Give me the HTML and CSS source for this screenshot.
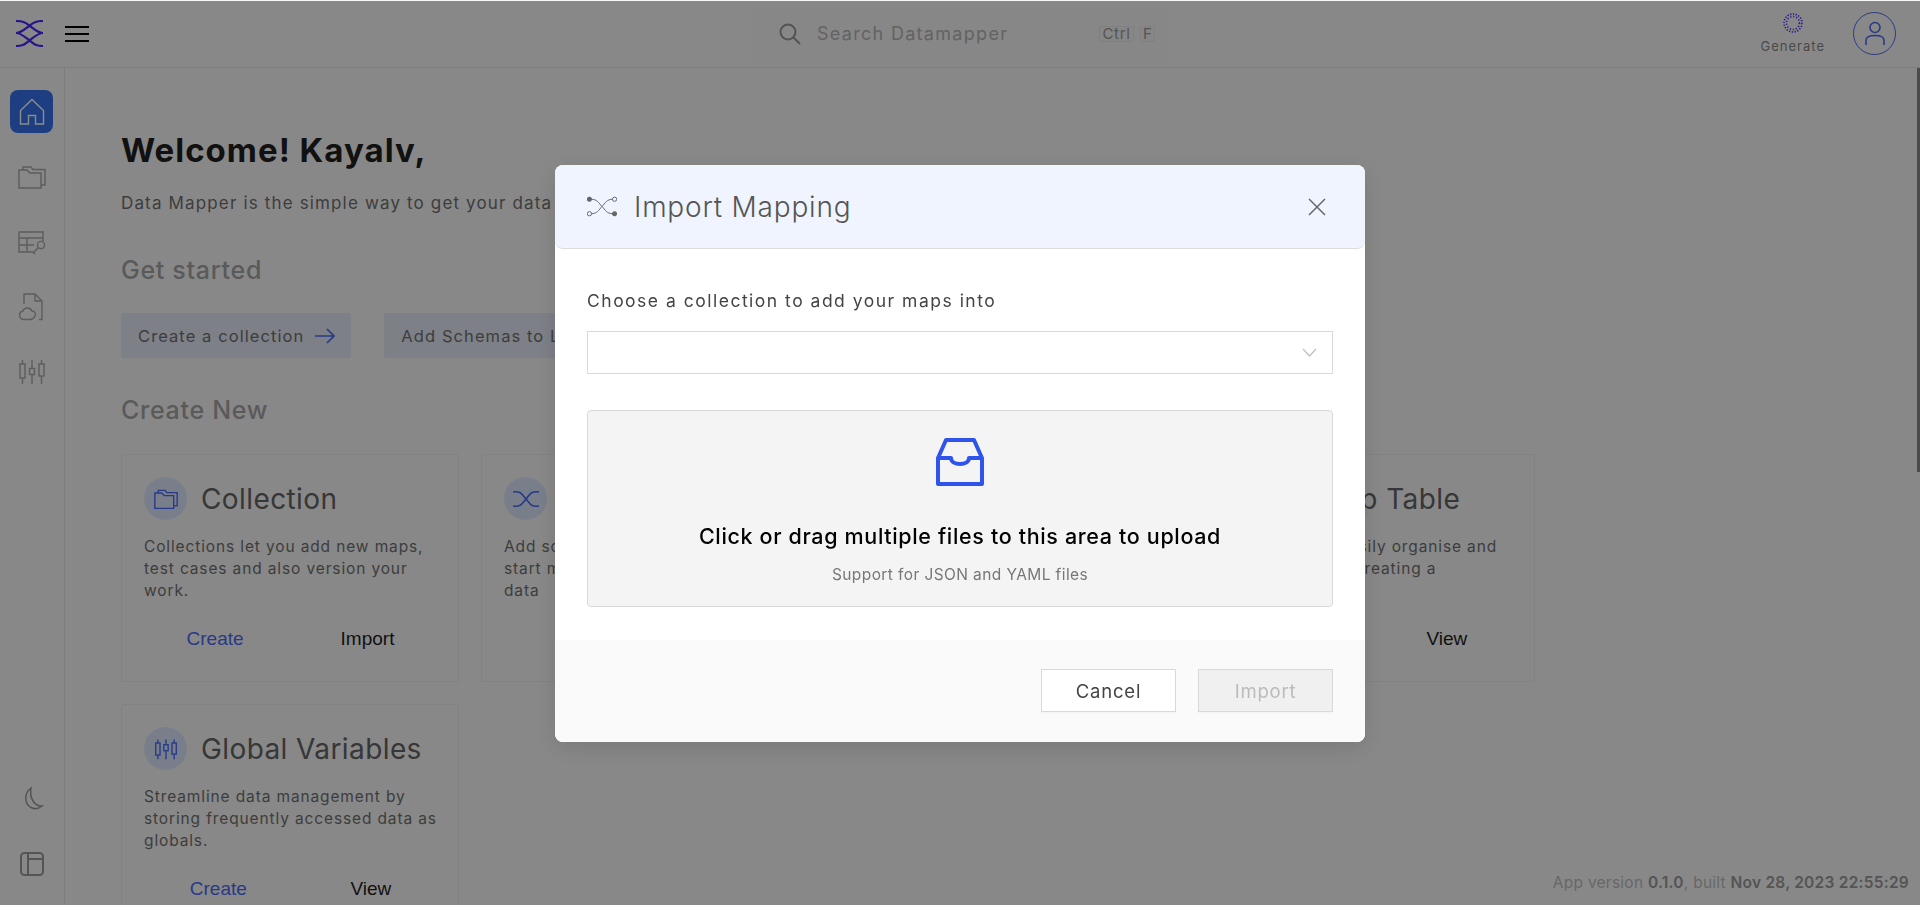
FILE: index.html
```html
<!DOCTYPE html>
<html lang="en">
<head>
    <meta charset="UTF-8">
    <meta name="viewport" content="width=device-width, initial-scale=1.0">
    <title>Datamapper</title>
    <link rel="stylesheet" href="styles.css">
</head>
<body>

    <div class="app">
        <header class="topbar">
            <div class="brand">
                <svg class="logo" width="27" height="27" viewBox="0 0 27 27" fill="none" stroke="#4528fa" stroke-width="2.2">
                    <path d="M0 1C8 1 10 3 14 6C18 9 22 13 27 13"/>
                    <path d="M27 1C19 1 17 3 13 6C9 9 5 13 0 13"/>
                    <path d="M0 13C5 13 9 17 13 20C17 23 19 26 27 26"/>
                    <path d="M27 13C22 13 18 17 14 20C10 23 8 26 0 26"/>
                </svg>
                <div class="burger"><span></span><span></span><span></span></div>
            </div>
            <div class="search">
                <svg width="22" height="22" viewBox="0 0 22 22" fill="none" stroke="#9a9a9a" stroke-width="2">
                    <circle cx="9" cy="9" r="7.5"/>
                    <path d="M14.5 14.5 21 21"/>
                </svg>
                <span class="search-text">Search Datamapper</span>
                <kbd class="key key-ctrl">Ctrl</kbd>
                <kbd class="key key-f">F</kbd>
            </div>
            <div class="top-right">
                <div class="generate">
                    <svg width="20" height="20" viewBox="0 0 20 20" fill="none" stroke="#4528fa">
                        <circle cx="10" cy="10" r="9" stroke-width="1.6" stroke-dasharray="1.3 1.5"/>
                        <circle cx="10" cy="10" r="6.500" stroke-width="1.600" stroke-dasharray="1.200 1.800"/>
                    </svg>
                    <span>Generate</span>
                </div>
                <div class="avatar">
                    <svg width="24" height="26" viewBox="0 0 24 26" fill="none" stroke="#4a6af5" stroke-width="1.6">
                        <circle cx="12" cy="6.5" r="5"/>
                        <path d="M3 24V19.5C3 16 6 14.5 12 14.5C18 14.5 21 16 21 19.5V24"/>
                    </svg>
                </div>
            </div>
        </header>

        <div class="layout">
            <nav class="sidebar">
                <div class="side-group">
                    <a class="side-item active">
                        <svg width="28" height="28" viewBox="0 0 28 28" fill="none" stroke="#fff" stroke-width="1.4">
                            <path d="M2.5 12.5 14 1.5 25.5 12.5V26H17.5V17.5H10.5V26H2.5Z"/>
                        </svg>
                    </a>
                    <a class="side-item">
                        <svg width="28" height="28" viewBox="0 0 28 28" fill="none" stroke="#a8a8a8" stroke-width="1.4">
                            <path d="M1 25V7H9L12 10H23V25Z"/>
                            <path d="M5 7V4H13L15 6.5H27V22H23"/>
                        </svg>
                    </a>
                    <a class="side-item">
                        <svg width="28" height="28" viewBox="0 0 28 28" fill="none" stroke="#a8a8a8" stroke-width="1.4">
                            <path d="M15 24H1V4H25V13"/>
                            <path d="M1 10H25M1 17H16M9 10V24"/>
                            <circle cx="23" cy="17" r="3.6"/>
                            <path d="M20.5 19.5 15.5 24.5 17 26"/>
                        </svg>
                    </a>
                    <a class="side-item">
                        <svg width="28" height="28" viewBox="0 0 28 28" fill="none" stroke="#a8a8a8" stroke-width="1.4">
                            <path d="M6 11V1H17L24 8V26.5H21"/>
                            <path d="M17 1V8H24"/>
                            <path d="M6 26.5A4.3 4.3 0 0 1 5 18C6 14 12 14 14 18C17 18 18 21 17 23C16 25 14 26.5 12 26.5Z"/>
                        </svg>
                    </a>
                    <a class="side-item">
                        <svg width="28" height="28" viewBox="0 0 28 28" fill="none" stroke="#a8a8a8" stroke-width="1.4">
                            <rect x="2" y="6" width="5" height="14"/>
                            <rect x="11.5" y="10.5" width="5" height="6"/>
                            <rect x="21" y="6" width="5" height="12"/>
                            <path d="M4.5 2V6M4.5 20V26M14 2V10.5M14 16.5V26M23.500 2V6M23.500 18V26"/>
                        </svg>
                    </a>
                </div>
                <div class="side-group">
                    <a class="side-item">
                        <svg width="28" height="28" viewBox="0 0 28 28" fill="none" stroke="#999" stroke-width="1.5">
                            <path d="M13 3C6 8 6 19 13 22.500C17 24.500 21 23.500 24 21C18 21.500 11 15 13 3Z"/>
                        </svg>
                    </a>
                    <a class="side-item">
                        <svg width="28" height="28" viewBox="0 0 28 28" fill="none" stroke="#999" stroke-width="2">
                            <rect x="3" y="3" width="22" height="22" rx="3.500"/>
                            <path d="M10 3V25M10 9H25"/>
                        </svg>
                    </a>
                </div>
            </nav>

            <main class="content">
                <h1>Welcome! Kayalv,</h1>
                <p class="intro">Data Mapper is the simple way to get your data</p>

                <h2 class="get-started">Get started</h2>
                <div class="quick-links">
                    <a class="quick-link">
                        Create a collection
                        <svg width="20" height="16" viewBox="0 0 20 16" fill="none" stroke="#4a6af5" stroke-width="1.7">
                            <path d="M0 8H19M12 1 19 8 12 15"/>
                        </svg>
                    </a>
                    <a class="quick-link">Add Schemas to L</a>
                </div>

                <h2 class="create-new">Create New</h2>
                <div class="cards">
                    <section class="card">
                        <div class="card-head">
                            <span class="card-icon">
                                <svg width="24" height="24" viewBox="0 0 28 28" fill="none" stroke="#4a6af5" stroke-width="1.6">
                                    <path d="M1 25V7H9L12 10H23V25Z"/>
                                    <path d="M5 7V4H13L15 6.500H27V22H23"/>
                                </svg>
                            </span>
                            <h3>Collection</h3>
                        </div>
                        <p>Collections let you add new maps,<br>test cases and also version your<br>work.</p>
                        <div class="card-actions">
                            <a class="create">Create</a>
                            <a>Import</a>
                        </div>
                    </section>

                    <section class="card">
                        <div class="card-head">
                            <span class="card-icon">
                                <svg width="26" height="18" viewBox="0 0 26 18" fill="none" stroke="#4a6af5" stroke-width="1.6">
                                    <path d="M0 2C8 1 9 4 13 9C17 14 18 17 26 16"/>
                                    <path d="M0 16C8 17 9 14 13 9C17 4 18 1 26 2"/>
                                </svg>
                            </span>
                        </div>
                        <p>Add sc<br>start m<br>data</p>
                        <div class="card-actions">
                            <a class="create">Create</a>
                            <a></a>
                        </div>
                    </section>

                    <section class="card"></section>

                    <section class="card">
                        <div class="card-head">
                            <span class="card-icon"></span>
                            <h3>Lookup Table</h3>
                        </div>
                        <p>Tables let you easily organise and<br>manage data by creating a</p>
                        <div class="card-actions">
                            <a class="create">Create</a>
                            <a>View</a>
                        </div>
                    </section>

                    <section class="card">
                        <div class="card-head">
                            <span class="card-icon">
                                <svg width="24" height="24" viewBox="0 0 28 28" fill="none" stroke="#4a6af5" stroke-width="1.6">
                                    <rect x="2" y="7" width="5" height="14"/>
                                    <rect x="11.500" y="9" width="5" height="7"/>
                                    <rect x="21" y="7" width="5" height="13"/>
                                    <path d="M4.500 3V7M4.500 21V26M14 3V9M14 16V26M23.500 3V7M23.500 20V26"/>
                                </svg>
                            </span>
                            <h3>Global Variables</h3>
                        </div>
                        <p>Streamline data management by<br>storing frequently accessed data as<br>globals.</p>
                        <div class="card-actions">
                            <a class="create">Create</a>
                            <a>View</a>
                        </div>
                    </section>
                </div>
            </main>
        </div>

        <div class="version">App version <b>0.1.0</b>, built <b>Nov 28, 2023 22:55:29</b></div>
        <div class="scroll-thumb"></div>
    </div>

    <div class="mask"></div>

    <div class="modal-wrap">
        <div class="modal">
            <div class="modal-head">
                <svg width="30" height="21" viewBox="0 0 31 21" fill="none" stroke="#666" stroke-width="1">
                    <path d="M4 3C11 3 12 7 15.500 10.500C19 14 20 18 27 18"/>
                    <path d="M4 18C11 18 12 14 15.500 10.500C19 7 20 3 27 3"/>
                    <circle cx="2.500" cy="3" r="2.200" fill="#666"/>
                    <circle cx="28.500" cy="3" r="2.200" fill="#eff4ff"/>
                    <circle cx="2.500" cy="18" r="2.200" fill="#eff4ff"/>
                    <circle cx="28.500" cy="18" r="2.200" fill="#666"/>
                </svg>
                <h2>Import Mapping</h2>
                <svg class="modal-close" width="18" height="18" viewBox="0 0 18 18" fill="none" stroke="#666" stroke-width="1.500">
                    <path d="M1 1 17 17M17 1 1 17"/>
                </svg>
            </div>
            <div class="modal-body">
                <label class="modal-label">Choose a collection to add your maps into</label>
                <div class="select">
                    <svg width="15" height="9" viewBox="0 0 15 9" fill="none" stroke="#bfbfbf" stroke-width="1.200">
                        <path d="M1 1 7.500 8 14 1"/>
                    </svg>
                </div>
                <div class="dropzone">
                    <svg width="48" height="48" viewBox="0 0 48 48" fill="none" stroke="#2f54eb" stroke-width="4" stroke-linejoin="round">
                        <path d="M10 2H38L46 20V46H2V20Z"/>
                        <path d="M2 20H15C15 28 33 28 33 20H46"/>
                    </svg>
                    <div class="drop-title">Click or drag multiple files to this area to upload</div>
                    <div class="drop-hint">Support for JSON and YAML files</div>
                </div>
            </div>
            <div class="modal-foot">
                <button class="btn">Cancel</button>
                <button class="btn btn-disabled">Import</button>
            </div>
        </div>
    </div>

</body>
</html>
```

FILE: styles.css
```css
* {
    box-sizing: border-box;
}

html, body {
    margin: 0;
    height: 905px;
    overflow: hidden;
}

body {
    font-family: Inter, "Noto Sans", sans-serif;
    background-color: #f8f8f8;
}

h1, h2, h3, p {
    margin: 0;
}

.app {
    height: 905px;
    display: flex;
    flex-direction: column;
    position: relative;
}

.topbar {
    height: 68px;
    flex-shrink: 0;
    display: flex;
    align-items: center;
    border-bottom: 1px solid #e2e2e2;
    position: relative;
}

.brand {
    display: flex;
    align-items: center;
    padding-left: 16px;
    gap: 22px;
    width: 750px;
}

.burger {
    width: 24px;
    display: flex;
    flex-direction: column;
    gap: 5px;
}

.burger span {
    height: 2px;
    background-color: #000;
}

.search {
    width: 420px;
    height: 56px;
    display: flex;
    align-items: center;
    padding-left: 29px;
    background-color: #f6f6f6;
}

.search-text {
    margin-left: 16px;
    width: 282px;
    font-size: 18px;
    letter-spacing: 1.3px;
    color: #b4b4b4;
}

.key {
    height: 16px;
    margin-right: 6px;
    font-family: inherit;
    font-size: 15px;
    line-height: 14px;
    text-align: center;
    color: #999;
    background-color: #f4f4f4;
    border: 1px solid #eaeaea;
    border-radius: 2px;
}

.key-ctrl {
    width: 35px;
    letter-spacing: 0.7px;
}

.key-f {
    width: 15px;
}

.top-right {
    margin-left: auto;
    display: flex;
    align-items: center;
    padding-right: 24px;
    gap: 28px;
}

.generate {
    display: flex;
    flex-direction: column;
    align-items: center;
    gap: 5px;
    font-size: 13px;
    letter-spacing: 1px;
    color: #888;
}

.avatar {
    width: 43px;
    height: 43px;
    border-radius: 50%;
    border: 1px solid #4a6af5;
    display: flex;
    align-items: center;
    justify-content: center;
}

.layout {
    flex: 1;
    display: flex;
    min-height: 0;
}

.sidebar {
    width: 65px;
    flex-shrink: 0;
    border-right: 1px solid #e2e2e2;
    display: flex;
    flex-direction: column;
    justify-content: space-between;
    padding: 22px 0 20px 10px;
}

.side-group {
    display: flex;
    flex-direction: column;
    gap: 22px;
}

.side-item {
    width: 43px;
    height: 43px;
    border-radius: 8px;
    display: flex;
    align-items: center;
    justify-content: center;
}

.side-item.active {
    background-color: #3671e9;
}

.content {
    flex: 1;
    padding: 60px 0 0 56px;
    min-width: 0;
}

h1 {
    font-size: 33px;
    line-height: 44px;
    font-weight: 700;
    letter-spacing: 1px;
    color: #1f1f1f;
}

.intro {
    margin-top: 19px;
    font-size: 17px;
    line-height: 24px;
    letter-spacing: 1.15px;
    color: #707070;
}

.get-started, .create-new {
    font-size: 25px;
    line-height: 36px;
    font-weight: 500;
    letter-spacing: 0.7px;
    color: #a5a5a5;
}

.get-started {
    margin-top: 37px;
}

.create-new {
    margin-top: 34px;
}

.quick-links {
    display: flex;
    gap: 33px;
    margin-top: 25px;
}

.quick-link {
    height: 45px;
    display: flex;
    align-items: center;
    gap: 11px;
    padding: 0 16px 0 17px;
    font-size: 16.5px;
    letter-spacing: 1.08px;
    color: #707070;
    background-color: #e3e9f5;
    border-radius: 2px;
}

.cards {
    display: grid;
    grid-template-columns: 338px 338px 334px 338px;
    gap: 22px;
    margin-top: 26px;
}

.card {
    height: 228px;
    padding: 22px;
    border: 1px solid #ededed;
    border-radius: 2px;
}

.card-head {
    display: flex;
    align-items: center;
    gap: 14px;
    height: 43px;
}

.card-icon {
    width: 43px;
    height: 43px;
    flex-shrink: 0;
    border-radius: 50%;
    background-color: #dce6fd;
    display: flex;
    align-items: center;
    justify-content: center;
}

h3 {
    font-size: 28px;
    font-weight: 400;
    letter-spacing: 0.4px;
    color: #646464;
    white-space: nowrap;
}

.card p {
    margin-top: 16px;
    height: 66px;
    font-size: 15.5px;
    line-height: 22px;
    letter-spacing: 0.87px;
    color: #707070;
    white-space: nowrap;
}

.card-actions {
    display: flex;
    justify-content: space-around;
    margin: 25px -7px 0 -6px;
    font-family: "Liberation Sans", Arial, sans-serif;
    font-size: 19px;
    line-height: 24px;
    color: #1f1f1f;
}

.create {
    color: #4a6af5;
}

.version {
    position: absolute;
    right: 11px;
    bottom: 11px;
    font-size: 15.5px;
    line-height: 22px;
    letter-spacing: 0.25px;
    color: #bdbdbd;
}

.version b {
    color: #9a9a9a;
    font-weight: 600;
}

.scroll-thumb {
    position: absolute;
    top: 68px;
    right: 0;
    width: 3px;
    height: 404px;
    background-color: #8a8a8a;
}

.mask {
    position: fixed;
    top: 1px;
    left: 0;
    right: 0;
    bottom: 0;
    background-color: rgba(0, 0, 0, 0.45);
}

.modal-wrap {
    position: fixed;
    top: 0;
    left: 0;
    right: 0;
    bottom: 0;
    display: flex;
    justify-content: center;
    padding-top: 165px;
}

.modal {
    width: 810px;
    height: 577px;
    background-color: #fff;
    border-radius: 8px;
    box-shadow: 0 6px 24px rgba(0, 0, 0, 0.12);
    display: flex;
    flex-direction: column;
}

.modal-head {
    height: 84px;
    flex-shrink: 0;
    display: flex;
    align-items: center;
    padding: 0 39px 0 32px;
    background-color: #eff4ff;
    border-bottom: 1px solid #dcdcdc;
    border-radius: 8px;
}

.modal-head h2 {
    margin-left: 17px;
    font-size: 28px;
    font-weight: 300;
    letter-spacing: 0.8px;
    color: #555;
}

.modal-close {
    margin-left: auto;
}

.modal-body {
    flex: 1;
    padding: 39px 32px 0;
}

.modal-label {
    display: block;
    font-size: 17.5px;
    line-height: 26px;
    letter-spacing: 1.5px;
    color: #444;
}

.select {
    height: 43px;
    margin-top: 17px;
    border: 1px solid #d9d9d9;
    display: flex;
    align-items: center;
    justify-content: flex-end;
    padding-right: 15px;
}

.dropzone {
    height: 197px;
    margin-top: 36px;
    padding-top: 27px;
    background-color: #f4f4f4;
    border: 1px solid #d9d9d9;
    border-radius: 4px;
    display: flex;
    flex-direction: column;
    align-items: center;
}

.drop-title {
    margin-top: 35px;
    font-size: 21.5px;
    line-height: 30px;
    letter-spacing: 0.65px;
    font-weight: 500;
    color: #000;
}

.drop-hint {
    margin-top: 14px;
    font-size: 15.5px;
    line-height: 20px;
    letter-spacing: 0.4px;
    color: #777;
}

.modal-foot {
    height: 102px;
    flex-shrink: 0;
    display: flex;
    justify-content: flex-end;
    gap: 22px;
    padding: 29px 32px 0;
    background-color: #fafafa;
    border-radius: 0 0 8px 8px;
}

.btn {
    width: 135px;
    height: 43px;
    font-family: inherit;
    font-size: 18.5px;
    letter-spacing: 0.8px;
    color: #444;
    background-color: #fff;
    border: 1px solid #d9d9d9;
    box-shadow: 0 2px 0 rgba(0, 0, 0, 0.02);
}

.btn-disabled {
    color: #bbb;
    background-color: #f0f0f0;
}
```
